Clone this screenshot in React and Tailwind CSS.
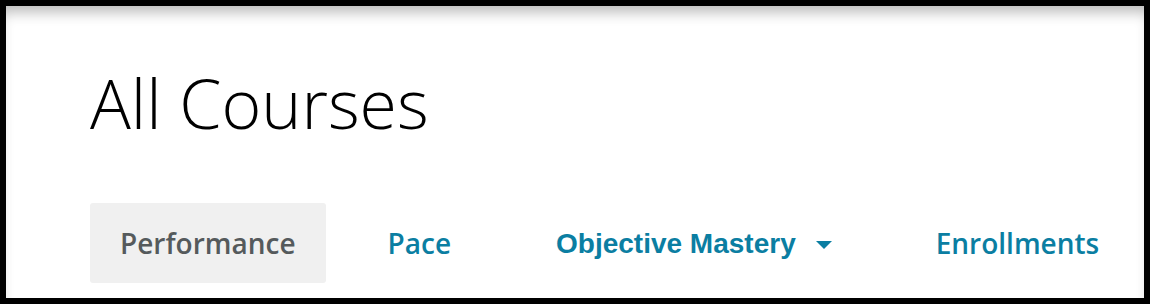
import React from 'react';

const tabs = [
  { label: 'Performance', active: true },
  { label: 'Pace' },
  { label: 'Objective Mastery', dropdown: true },
  { label: 'Enrollments' },
];

function Caret() {
  return (
    <svg width="16" height="8" viewBox="0 0 16 8" className="ml-[20px] mt-[4px]">
      <path d="M0 0 L16 0 L8 8 Z" fill="#0b7ea2" />
    </svg>
  );
}

function App() {
  return (
    <div className="h-[304px] w-[1150px] bg-black pt-[6px] pl-[6px] pr-[6px] pb-[6px]">
      <div className="h-full w-full bg-white shadow-[inset_0_12px_14px_-6px_rgba(0,0,0,0.28)] pl-[84px] pt-[62px]">
        <h1
          className="text-[68px] leading-[70px] font-light text-black"
          style={{ fontFamily: '"Open Sans", sans-serif' }}
        >
          All Courses
        </h1>

        <nav className="mt-[65px] flex items-center">
          {tabs.map((tab, i) => (
            <div
              key={tab.label}
              className={
                'flex h-[80px] items-center rounded-[3px] ' +
                (tab.active ? 'bg-[#f0f0f0] text-[#555a5c] px-[30px]' : 'text-[#0b7ea2] px-[31px]') +
                (i === 1 ? ' ml-[31px]' : '') +
                (i === 2 ? ' ml-[43px]' : '') +
                (i === 3 ? ' ml-[42px]' : '')
              }
            >
              {tab.dropdown ? (
                <>
                  <span
                    className="text-[28px] font-bold translate-y-[1px]"
                    style={{ fontFamily: '"Liberation Sans", Arial, sans-serif' }}
                  >
                    {tab.label}
                  </span>
                  <Caret />
                </>
              ) : (
                <span
                  className="text-[28px] font-semibold"
                  style={{ fontFamily: '"Open Sans", sans-serif' }}
                >
                  {tab.label}
                </span>
              )}
            </div>
          ))}
        </nav>
      </div>
    </div>
  );
}

export default App;
